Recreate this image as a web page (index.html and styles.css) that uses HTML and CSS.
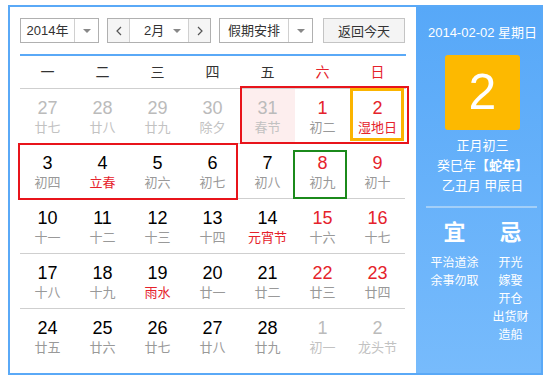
FILE: index.html
```html
<!DOCTYPE html>
<html lang="zh-CN">
<head>
    <meta charset="UTF-8">
    <title>万年历</title>
    <link rel="stylesheet" href="styles.css">
</head>
<body>
    <div class="calendar">
        <div class="main">
            <div class="toolbar">
                <div class="select year">
                    <span class="select-text">2014年</span>
                    <span class="select-arrow"><i class="caret"></i></span>
                </div>
                <div class="month-picker">
                    <span class="step"><svg width="6" height="10" viewBox="0 0 6 10"><polyline points="5,1 1,5 5,9" fill="none" stroke="#555" stroke-width="1.2"/></svg></span>
                    <span class="month-text">2月</span>
                    <span class="month-arrow"><i class="caret"></i></span>
                    <span class="step"><svg width="6" height="10" viewBox="0 0 6 10"><polyline points="1,1 5,5 1,9" fill="none" stroke="#555" stroke-width="1.2"/></svg></span>
                </div>
                <div class="select holiday">
                    <span class="select-text">假期安排</span>
                    <span class="select-arrow"><i class="caret"></i></span>
                </div>
                <button class="today-btn">返回今天</button>
            </div>

            <div class="weekdays">
                <span>一</span><span>二</span><span>三</span><span>四</span><span>五</span>
                <span class="weekend">六</span><span class="weekend">日</span>
            </div>

            <div class="month">
                <div class="days">
                    <div class="day other"><b>27</b><em>廿七</em></div>
                    <div class="day other"><b>28</b><em>廿八</em></div>
                    <div class="day other"><b>29</b><em>廿九</em></div>
                    <div class="day other"><b>30</b><em>除夕</em></div>
                    <div class="day other rest"><b>31</b><em>春节</em></div>
                    <div class="day weekend"><b>1</b><em>初二</em></div>
                    <div class="day weekend"><b>2</b><em class="fest">湿地日</em></div>

                    <div class="day"><b>3</b><em>初四</em></div>
                    <div class="day"><b>4</b><em class="fest">立春</em></div>
                    <div class="day"><b>5</b><em>初六</em></div>
                    <div class="day"><b>6</b><em>初七</em></div>
                    <div class="day"><b>7</b><em>初八</em></div>
                    <div class="day weekend"><b>8</b><em>初九</em></div>
                    <div class="day weekend"><b>9</b><em>初十</em></div>

                    <div class="day"><b>10</b><em>十一</em></div>
                    <div class="day"><b>11</b><em>十二</em></div>
                    <div class="day"><b>12</b><em>十三</em></div>
                    <div class="day"><b>13</b><em>十四</em></div>
                    <div class="day"><b>14</b><em class="fest">元宵节</em></div>
                    <div class="day weekend"><b>15</b><em>十六</em></div>
                    <div class="day weekend"><b>16</b><em>十七</em></div>

                    <div class="day"><b>17</b><em>十八</em></div>
                    <div class="day"><b>18</b><em>十九</em></div>
                    <div class="day"><b>19</b><em class="fest">雨水</em></div>
                    <div class="day"><b>20</b><em>廿一</em></div>
                    <div class="day"><b>21</b><em>廿二</em></div>
                    <div class="day weekend"><b>22</b><em>廿三</em></div>
                    <div class="day weekend"><b>23</b><em>廿四</em></div>

                    <div class="day"><b>24</b><em>廿五</em></div>
                    <div class="day"><b>25</b><em>廿六</em></div>
                    <div class="day"><b>26</b><em>廿七</em></div>
                    <div class="day"><b>27</b><em>廿八</em></div>
                    <div class="day"><b>28</b><em>廿九</em></div>
                    <div class="day other"><b>1</b><em>初一</em></div>
                    <div class="day other"><b>2</b><em>龙头节</em></div>
                </div>

                <!-- holiday ranges, today and hover frames drawn over the days -->
                <div class="marks">
                    <div class="mark rest-a"></div>
                    <div class="mark rest-b"></div>
                    <div class="mark today"></div>
                    <div class="mark hover"></div>
                </div>
            </div>
        </div>

        <div class="side">
            <div class="side-date">2014-02-02 星期日</div>
            <div class="big-day">2</div>
            <div class="lunar">
                <div>正月初三</div>
                <div>癸巳年<strong>【蛇年】</strong></div>
                <div>乙丑月 甲辰日</div>
            </div>
            <div class="divider"></div>
            <div class="almanac">
                <div class="almanac-col">
                    <div class="almanac-title">宜</div>
                    <div>平治道涂</div>
                    <div>余事勿取</div>
                </div>
                <div class="almanac-col">
                    <div class="almanac-title">忌</div>
                    <div>开光</div>
                    <div>嫁娶</div>
                    <div>开仓</div>
                    <div>出货财</div>
                    <div>造船</div>
                </div>
            </div>
        </div>
    </div>
</body>
</html>
```

FILE: styles.css
```css
body {
    margin: 5px 8px;
    font-family: "Liberation Sans", "Noto Sans CJK SC", sans-serif;
    color: #333;
    background: #fff;
}
.calendar {
    display: flex;
    width: 535px;
    height: 370px;
    box-sizing: border-box;
    border: 2px solid #5aa9f7;
}
.main {
    width: 406px;
    padding: 11px 10px 0 10px;
    box-sizing: border-box;
}

/* toolbar */
.toolbar {
    display: flex;
    height: 25px;
    padding-bottom: 11px;
    border-bottom: 2px solid #5aa9f7;
}
.select,
.month-picker {
    display: flex;
    height: 25px;
    box-sizing: border-box;
    border: 1px solid #b0b0b0;
    background: #fff;
    font-size: 13px;
    line-height: 23px;
    color: #333;
}
.select-text {
    flex: 1;
    text-align: center;
}
.select-arrow,
.month-arrow {
    display: flex;
    width: 23px;
    align-items: center;
    justify-content: center;
}
.select-arrow {
    border-left: 1px solid #d0d0d0;
}
.caret {
    width: 0;
    height: 0;
    border-left: 4px solid transparent;
    border-right: 4px solid transparent;
    border-top: 4px solid #888;
}
.year {
    width: 79px;
    margin-right: 8px;
}
.month-picker {
    width: 104px;
    margin-right: 8px;
}
.step {
    display: flex;
    width: 21px;
    align-items: center;
    justify-content: center;
    background: #f5f5f5;
}
.step:first-child {
    border-right: 1px solid #d0d0d0;
}
.step:last-child {
    border-left: 1px solid #d0d0d0;
}
.month-text {
    flex: 1;
    padding-left: 14px;
}
.holiday {
    width: 94px;
    margin-right: 10px;
}
.today-btn {
    width: 82px;
    height: 25px;
    padding: 0;
    border: 1px solid #c4c4c4;
    background: #f4f4f4;
    font-family: inherit;
    font-size: 13px;
    color: #333;
}

/* weekday header */
.weekdays {
    display: grid;
    grid-template-columns: repeat(7, 55px);
    height: 32px;
    line-height: 32px;
    border-bottom: 1px solid #cfcfcf;
    text-align: center;
    font-size: 14px;
    color: #333;
}
.weekdays .weekend {
    color: #e5222b;
}

/* days */
.month {
    position: relative;
}
.days,
.marks {
    display: grid;
    grid-template-columns: repeat(7, 55px);
    grid-template-rows: repeat(5, 55px);
}
.day {
    display: flex;
    flex-direction: column;
    align-items: center;
    padding-top: 8px;
    box-sizing: border-box;
    border-bottom: 1px solid #cfcfcf;
}
.day:nth-last-child(-n+7) {
    border-bottom: none;
}
.day b {
    font-weight: normal;
    font-size: 18px;
    line-height: 22px;
    color: #000;
}
.day em {
    font-style: normal;
    font-size: 13px;
    line-height: 17px;
    color: #999;
}
.day.weekend b {
    color: #e5222b;
}
.day em.fest {
    color: #e5222b;
}
.day.other b {
    color: #bbb;
}
.day.other em {
    color: #c2c2c2;
}
.day.rest {
    background: #fdeeee;
}

.marks {
    position: absolute;
    top: 0;
    left: 0;
    pointer-events: none;
}
.mark {
    box-sizing: border-box;
}
.rest-a {
    grid-column: 5 / 8;
    grid-row: 1;
    margin: -3px -4px 0 0;
    border: 2px solid #e8141b;
}
.rest-b {
    grid-column: 1 / 5;
    grid-row: 2;
    margin: -1px 2px -1px -2px;
    border: 2px solid #e8141b;
}
.today {
    grid-column: 7;
    grid-row: 1;
    margin: -1px 1px 3px 0;
    border: 3px solid #fbb400;
}
.hover {
    grid-column: 6;
    grid-row: 2;
    margin: 6px 3px 0 -2px;
    border: 2px solid #1b8a1b;
}

/* right panel */
.side {
    flex: 1;
    display: flex;
    flex-direction: column;
    align-items: center;
    padding: 16px 0 0 8px;
    background: linear-gradient(#57a8f8, #77bbfc);
    color: #fff;
    font-size: 13px;
}
.side-date {
    line-height: 20px;
}
.big-day {
    width: 75px;
    height: 75px;
    margin-top: 12px;
    border-radius: 3px;
    background: #fdb900;
    font-size: 50px;
    line-height: 75px;
    text-align: center;
}
.lunar {
    margin-top: 6px;
    line-height: 20px;
    text-align: center;
}
.divider {
    align-self: stretch;
    height: 2px;
    margin: 10px 4px 0 2px;
    background: #a3cff8;
}
.almanac {
    display: flex;
    margin-top: 10px;
}
.almanac-col {
    width: 56px;
    text-align: center;
    font-size: 12px;
    line-height: 18px;
}
.almanac-title {
    margin-bottom: 6px;
    font-size: 22px;
    font-weight: bold;
    line-height: 30px;
}
```
